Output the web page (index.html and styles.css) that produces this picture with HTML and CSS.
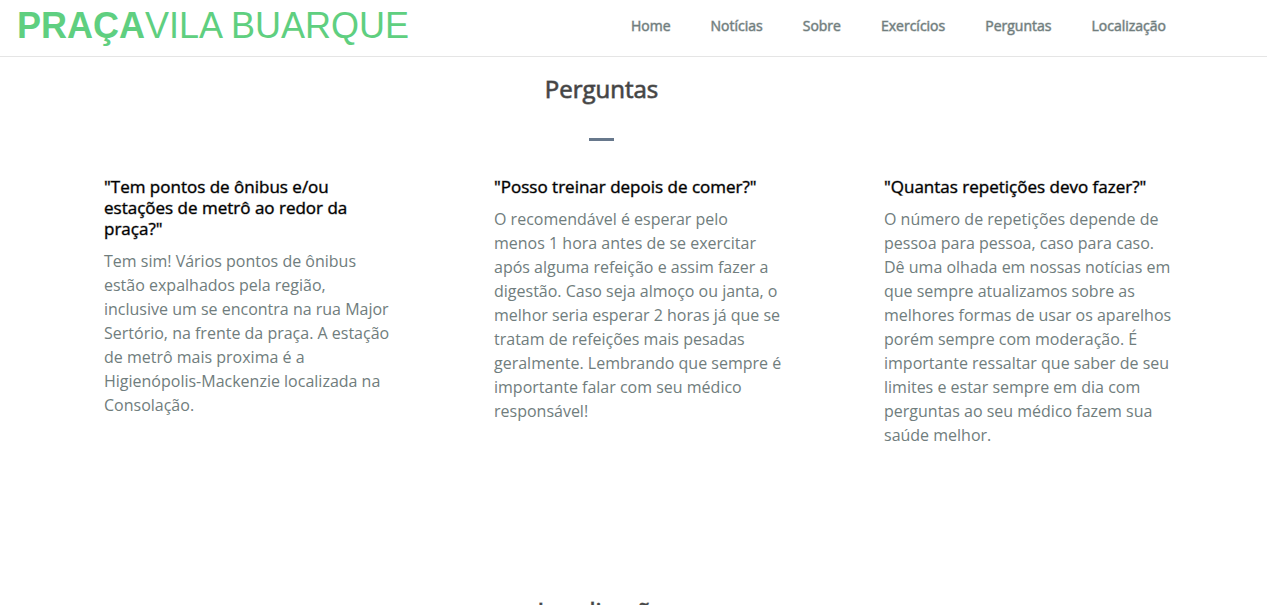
FILE: index.html
```html
<!DOCTYPE html>
<html lang="pt-BR">
<head>
<meta charset="utf-8">
<title>Praça Vila Buarque</title>
<link rel="stylesheet" href="styles.css">
</head>
<body>
<header class="header">
  <a class="logo" href="#home"><strong>PRAÇA</strong>VILA BUARQUE</a>
  <nav class="nav">
    <a href="#home">Home</a>
    <a href="#noticias">Notícias</a>
    <a href="#sobre">Sobre</a>
    <a href="#exercicios">Exercícios</a>
    <a href="#perguntas">Perguntas</a>
    <a href="#localizacao">Localização</a>
  </nav>
</header>
<main>
  <section class="section" id="perguntas">
    <h2 class="title">Perguntas</h2>
    <hr class="rule">
    <div class="faq">
      <article>
        <h3 class="question">"Tem pontos de ônibus e/ou estações de metrô ao redor da praça?"</h3>
        <p class="answer">Tem sim! Vários pontos de ônibus estão expalhados pela região, inclusive um se encontra na rua Major Sertório, na frente da praça. A estação de metrô mais proxima é a Higienópolis-Mackenzie localizada na Consolação.</p>
      </article>
      <article>
        <h3 class="question">"Posso treinar depois de comer?"</h3>
        <p class="answer">O recomendável é esperar pelo menos 1 hora antes de se exercitar após alguma refeição e assim fazer a digestão. Caso seja almoço ou janta, o melhor seria esperar 2 horas já que se tratam de refeições mais pesadas geralmente. Lembrando que sempre é importante falar com seu médico responsável!</p>
      </article>
      <article>
        <h3 class="question">"Quantas repetições devo fazer?"</h3>
        <p class="answer">O número de repetições depende de pessoa para pessoa, caso para caso. Dê uma olhada em nossas notícias em que sempre atualizamos sobre as melhores formas de usar os aparelhos porém sempre com moderação. É importante ressaltar que saber de seu limites e estar sempre em dia com perguntas ao seu médico fazem sua saúde melhor.</p>
      </article>
    </div>
  </section>
  <section class="section" id="localizacao">
    <h2 class="title">Localização</h2>
  </section>
</main>
</body>
</html>
```
FILE: styles.css
```css
* { box-sizing: border-box; }
body {
  margin: 0;
  background: #fff;
  color: #707d7d;
  font: 16px/24px "Open Sans", "Noto Sans", sans-serif;
}
a { color: inherit; text-decoration: none; }
.header {
  display: flex;
  justify-content: space-between;
  padding: 0 101px 4px 17px;
  border-bottom: 1px solid #e5e5e5;
}
.logo {
  color: #5fcf80;
  font: 36px/52px "Liberation Sans", Arial, sans-serif;
}
.nav {
  display: flex;
  gap: 40px;
  font-size: 14px;
  line-height: 52px;
  -webkit-text-stroke: 1px rgba(112, 125, 125, 0.5);
}
.section { padding: 16px 64px 132px 0; }
.title {
  margin: 0;
  color: #444;
  font-size: 24px;
  font-weight: 400;
  line-height: 32px;
  text-align: center;
  -webkit-text-stroke: 1px rgba(68, 68, 68, 0.7);
}
.rule {
  width: 25px;
  height: 3px;
  margin: 33px auto 35px;
  border: 0;
  background: #67788c;
}
.faq {
  display: grid;
  grid-template-columns: repeat(3, 1fr);
  gap: 102px;
  padding: 0 31px 0 104px;
}
.question {
  margin: 0 0 10px;
  color: #000;
  font-size: 17px;
  font-weight: 400;
  line-height: 21px;
  -webkit-text-stroke: 1px rgba(0, 0, 0, 0.4);
}
.answer { margin: 0; }
```
